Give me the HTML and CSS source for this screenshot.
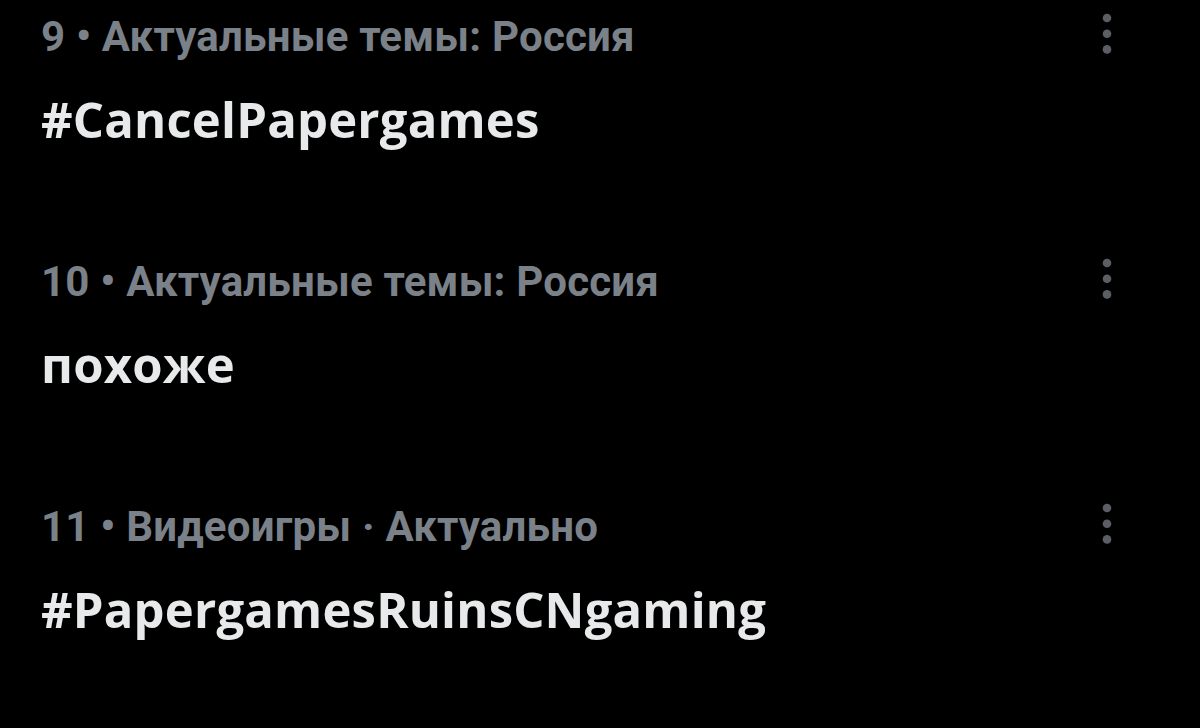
FILE: index.html
```html
<!DOCTYPE html>
<html lang="ru">
<head>
    <meta charset="UTF-8">
    <title>Актуальные темы</title>
    <link rel="stylesheet" href="styles.css">
</head>
<body>
    <div class="trends">
        <div class="trend">
            <div class="trend-text">
                <div class="trend-meta">9 • Актуальные темы: Россия</div>
                <div class="trend-title">#CancelPapergames</div>
            </div>
            <div class="more">
                <svg viewBox="0 0 10 42" width="10" height="42"><circle cx="5" cy="5" r="4.3"/><circle cx="5" cy="20.7" r="4.3"/><circle cx="5" cy="36.4" r="4.3"/></svg>
            </div>
        </div>
        <div class="trend">
            <div class="trend-text">
                <div class="trend-meta">10 • Актуальные темы: Россия</div>
                <div class="trend-title">похоже</div>
            </div>
            <div class="more">
                <svg viewBox="0 0 10 42" width="10" height="42"><circle cx="5" cy="5" r="4.3"/><circle cx="5" cy="20.7" r="4.3"/><circle cx="5" cy="36.4" r="4.3"/></svg>
            </div>
        </div>
        <div class="trend">
            <div class="trend-text">
                <div class="trend-meta">11 • Видеоигры · Актуально</div>
                <div class="trend-title">#PapergamesRuinsCNgaming</div>
            </div>
            <div class="more">
                <svg viewBox="0 0 10 42" width="10" height="42"><circle cx="5" cy="5" r="4.3"/><circle cx="5" cy="20.7" r="4.3"/><circle cx="5" cy="36.4" r="4.3"/></svg>
            </div>
        </div>
    </div>
</body>
</html>
```

FILE: styles.css
```css
body {
    margin: 0;
    background: #000;
    font-family: Roboto, "Liberation Sans", sans-serif;
    height: 728px;
    overflow: hidden;
}

.trends {
    padding: 10px 88px 0 41px;
}

.trend {
    display: flex;
    justify-content: space-between;
    align-items: flex-start;
    height: 245px;
}

.trend-meta {
    color: #7b8188;
    font-size: 42px;
    font-weight: 700;
    line-height: 54px;
    letter-spacing: 0.2px;
}

.trend-title {
    color: #e7e9ea;
    font-family: "Open Sans", sans-serif;
    font-size: 49px;
    font-weight: 700;
    line-height: 62px;
    letter-spacing: 0.2px;
    margin-top: 24px;
}

.more {
    padding-top: 3px;
}

.more svg {
    display: block;
    fill: #5b5f63;
}
```
